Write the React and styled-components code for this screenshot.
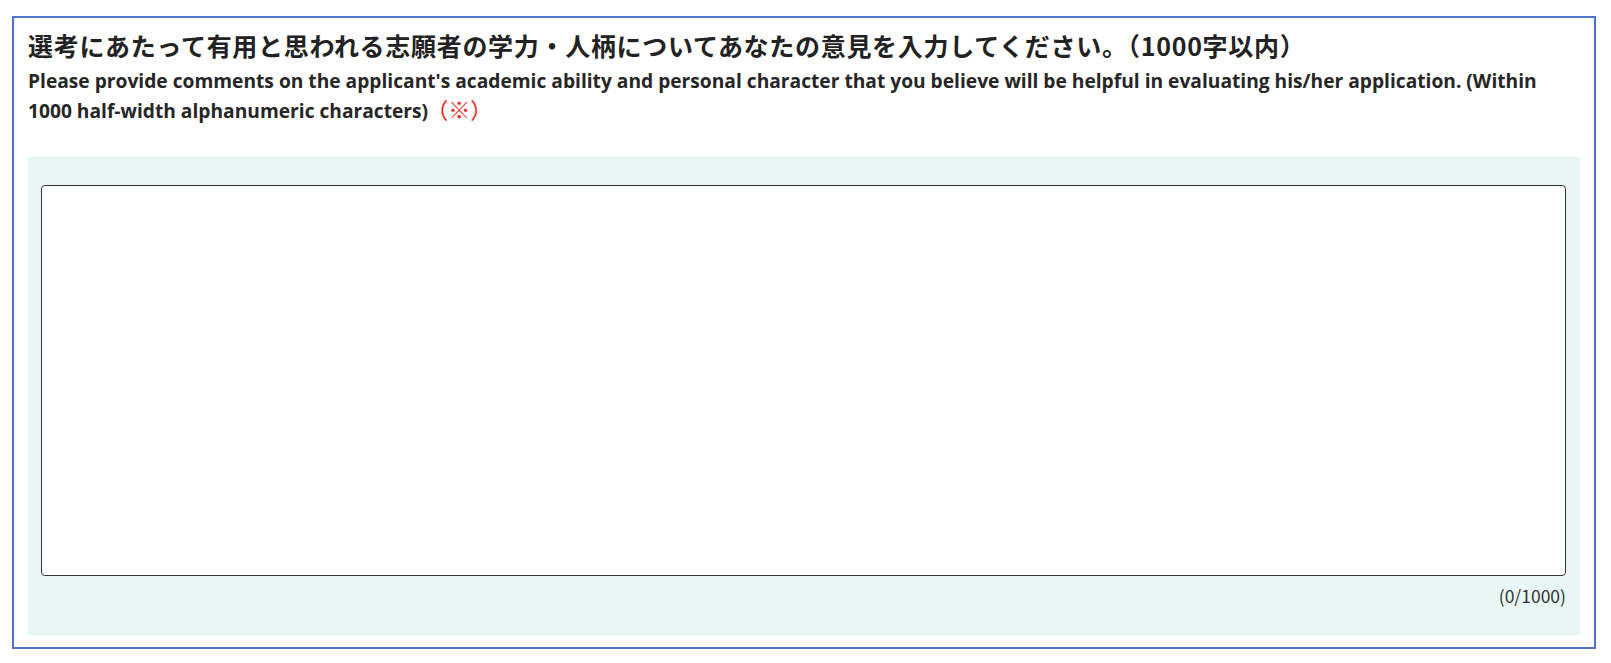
import React from "react";
import styled, { createGlobalStyle } from "styled-components";

const Global = createGlobalStyle`
  html, body { margin: 0; padding: 0; background: #fff; }
  body { font-family: "Noto Sans CJK JP", "Noto Sans", sans-serif; color: #222; }
`;

const Page = styled.div`
  padding: 16px 15px 12px 12px;
`;

const Panel = styled.section`
  border: 2px solid #4f74c9;
  padding: 9px 14px 12px 14px;
`;

const Title = styled.h2`
  margin: 0;
  font-size: 25px;
  line-height: 36px;
  font-weight: 700;
  color: #222;
  letter-spacing: 0.7px;
`;

const Sub = styled.p`
  margin: 3px 0 0;
  font-family: "Open Sans", "Noto Sans CJK JP", sans-serif;
  font-size: 19.2px;
  line-height: 30px;
  font-weight: 700;
  color: #262626;
  letter-spacing: 0;
`;

const Required = styled.span`
  color: #f01e1e;
  font-family: "Noto Sans CJK JP", sans-serif;
  font-size: 22px;
  line-height: 1;
  font-weight: 400;
  letter-spacing: 0;
  margin-left: -2px;
`;

const Field = styled.div`
  margin-top: 31px;
  background: #e8f6f6;
  padding: 28px 14px 28px 13px;
  display: flex;
  flex-direction: column;
`;

const Area = styled.textarea`
  box-sizing: border-box;
  width: 100%;
  height: 391px;
  border: 1px solid #333;
  border-radius: 4px;
  background: #fff;
  resize: none;
  margin: 0;
  display: block;
  font-family: inherit;
`;

const Counter = styled.div`
  align-self: flex-end;
  margin-top: 9px;
  font-size: 17.5px;
  line-height: 22px;
  color: #333;
  font-family: "Noto Sans CJK JP", "Noto Sans", sans-serif;
`;

export default function App() {
  return (
    <>
      <Global />
      <Page>
        <Panel>
          <Title>選考にあたって有用と思われる志願者の学力・人柄についてあなたの意見を入力してください。（1000字以内）</Title>
          <Sub>
            Please provide comments on the applicant's academic ability and personal character that you believe will be helpful in evaluating his/her application. (Within 1000 half-width alphanumeric characters)<Required>（※）</Required>
          </Sub>
          <Field>
            <Area />
            <Counter>(0/1000)</Counter>
          </Field>
        </Panel>
      </Page>
    </>
  );
}
